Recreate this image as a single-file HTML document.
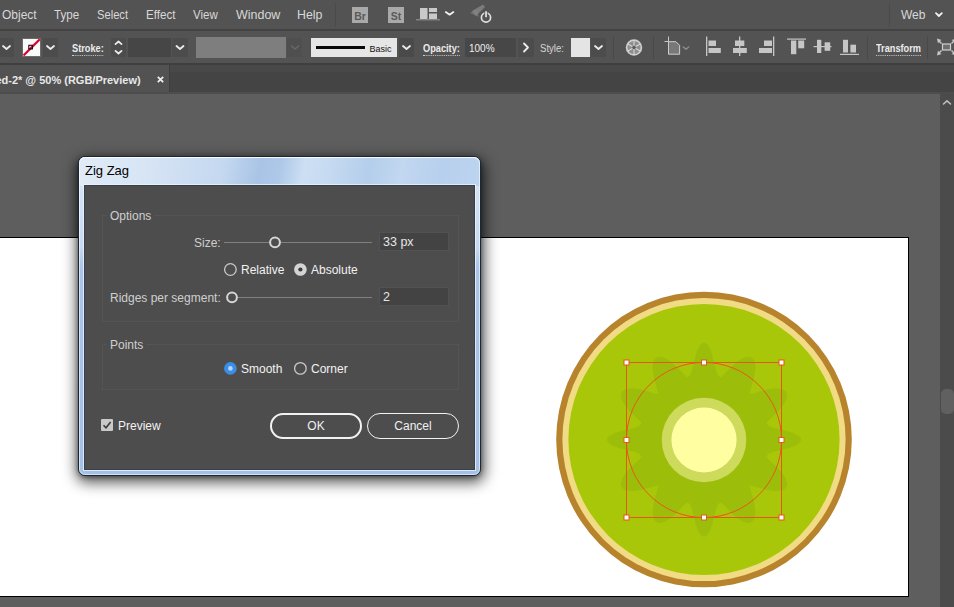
<!DOCTYPE html>
<html>
<head>
<meta charset="utf-8">
<title>Zig Zag</title>
<style>
*{box-sizing:border-box;margin:0;padding:0}
html,body{width:954px;height:607px;overflow:hidden;background:#5e5e5e;font-family:"Liberation Sans",sans-serif;}
.abs{position:absolute}
#root{position:absolute;left:0;top:0;width:954px;height:607px;overflow:hidden;background:#5e5e5e}
/* top bars */
#menubar{left:0;top:0;width:954px;height:30px;background:#535353}
#menubar .mi{position:absolute;top:6.6px;font-size:12px;line-height:16px;color:#d8d8d8;white-space:nowrap;transform-origin:0 50%}
#ctrlbar{left:0;top:29px;width:954px;height:35px;background:#535353;border-top:2px solid #434343}
#tabbar{left:0;top:63px;width:954px;height:30px;background:linear-gradient(180deg,#484848 0,#484848 7px,#444 7px,#444 100%);border-top:2px solid #3f3f3f}
#tab{left:0;top:65px;width:170px;height:27px;background:#525252;border-right:1px solid #3e3e3e}
#tabline{left:0;top:92px;width:954px;height:2px;background:#4d4d4d}
.lbl{position:absolute;font-size:10px;line-height:13px;color:#ececec;white-space:nowrap;font-weight:bold;transform-origin:0 50%}
.dot{border-bottom:1px dotted #cfcfcf}
.sep{position:absolute;width:1px;background:#484848;top:36px;height:24px}
/* canvas */
#artboard{left:-2px;top:237px;width:911px;height:360px;background:#fff;border:1px solid #000}
#vscroll{left:940px;top:93px;width:14px;height:514px;background:#4b4b4b}
#vthumb{left:941px;top:389px;width:13px;height:25px;background:#606060;border-radius:5px}
/* dialog */
#dlgshadow{left:79px;top:158px;width:401px;height:317px;border-radius:7px;box-shadow:1px 4px 14px 4px rgba(0,0,0,.62),0 1px 5px 1px rgba(0,0,0,.45)}
#dlg{left:78px;top:156px;width:403px;height:320px;border-radius:7px;border:1px solid #1d2733;overflow:hidden;
 background:
  linear-gradient(180deg,rgba(255,255,255,0) 0,rgba(255,255,255,0) 29px,#d4e3f4 29px,#c6daf1 90px,#a9c5e9 110px,#a3c0e6 100%)}
#dlgtitle{left:79px;top:157px;width:401px;height:29px;border-radius:6px 6px 0 0;
 background:linear-gradient(100deg,#e1ebf7 0%,#d6e4f4 18%,#c4d8f0 36%,#a9c4e6 45%,#adc8e8 50%,#cddff3 56%,#c6daf1 62%,#b4ceeb 72%,#c2d7f0 80%,#b7d0ed 90%,#bdd4ef 100%);
 box-shadow:inset 0 1px 0 rgba(255,255,255,.75)}
#dlghl{left:79px;top:157px;width:401px;height:318px;border-radius:6px;border:1px solid rgba(255,255,255,.55)}
#dlginner{left:84px;top:185px;width:391px;height:285px;background:#4d4d4d;border:1px solid #39404a;box-shadow:0 0 0 1px rgba(235,243,252,.8)}
.dt{position:absolute;font-size:13px;line-height:16px;color:#dadada;white-space:nowrap}
.fs{position:absolute;border:1px solid #545454}
.inp{position:absolute;background:#434343;border:1px solid #525252;color:#e6e6e6;font-size:12.5px;line-height:18px;padding-left:3px}
.track{position:absolute;height:1px;background:#808080}
.knob{position:absolute;width:12px;height:12px;border-radius:50%;border:2px solid #d8d8d8;background:#4d4d4d}
.radio{position:absolute;width:13px;height:13px;border-radius:50%;border:1px solid #d8d8d8;background:#4d4d4d}
.btn{position:absolute;height:26px;border-radius:13px;color:#f0f0f0;font-size:12px;line-height:22px;text-align:center}
</style>
</head>
<body>
<div id="root">

<!-- MENUBAR -->
<div id="menubar" class="abs">
  <span class="mi" id="m_Object" style="left:2px;transform:scaleX(1)">Object</span>
  <span class="mi" id="m_Type" style="left:54px;transform:scaleX(0.97)">Type</span>
  <span class="mi" id="m_Select" style="left:97px;transform:scaleX(0.93)">Select</span>
  <span class="mi" id="m_Effect" style="left:146px;transform:scaleX(0.97)">Effect</span>
  <span class="mi" id="m_View" style="left:193px;transform:scaleX(0.96)">View</span>
  <span class="mi" id="m_Window" style="left:236px;transform:scaleX(1.04)">Window</span>
  <span class="mi" id="m_Help" style="left:297px;transform:scaleX(1.03)">Help</span>
  <span class="mi" id="m_Web" style="left:901px;transform:scaleX(1)">Web</span>
</div>


<svg class="abs" style="left:0;top:0" width="954" height="30" viewBox="0 0 954 30">
  <rect x="335" y="3" width="1" height="24" fill="#4a4a4a"/>
  <rect x="352" y="7" width="16" height="16" fill="#a9a9a9"/>
  <rect x="388" y="7" width="16" height="16" fill="#a9a9a9"/>
  <text x="360" y="19.5" font-family="Liberation Sans, sans-serif" font-size="10.5" font-weight="bold" fill="#5a5a5a" text-anchor="middle">Br</text>
  <text x="396" y="19.5" font-family="Liberation Sans, sans-serif" font-size="10.5" font-weight="bold" fill="#5a5a5a" text-anchor="middle">St</text>
  <rect x="420" y="8" width="7.5" height="11" fill="#c9c9c9"/>
  <rect x="429" y="8" width="8" height="4" fill="#c9c9c9"/>
  <rect x="429" y="13.5" width="8" height="5.5" fill="#c9c9c9"/>
  <rect x="416" y="19.3" width="24" height="1" fill="#9a9a9a"/>
  <path d="M445.8 12.1 L449.6 14.700000000000001 L453.40000000000003 12.1" fill="none" stroke="#f2f2f2" stroke-width="1.8" stroke-linecap="round" stroke-linejoin="round"/>
  <!-- rocket + power -->
  <path d="M472 11 L483 4.5 L485 7 L476 16 Z" fill="#8a8a8a" opacity=".75"/>
  <path d="M470 13 L476 9 L479 17 Z" fill="#858585" opacity=".6"/>
  <circle cx="486" cy="17.5" r="4.6" fill="#535353" stroke="#e0e0e0" stroke-width="1.7"/>
  <rect x="484.4" y="10.5" width="3.2" height="6" fill="#535353"/>
  <rect x="485.2" y="11.2" width="1.7" height="6" fill="#e6e6e6"/>
  <rect x="889" y="3" width="1" height="24" fill="#4a4a4a"/>
  <path d="M936.0 13.2 L938.9 16.0 L941.8 13.2" fill="none" stroke="#f2f2f2" stroke-width="1.8" stroke-linecap="round" stroke-linejoin="round"/>
</svg>

<!-- CONTROL BAR -->
<div id="ctrlbar" class="abs"></div>


<svg class="abs" style="left:0;top:30px" width="954" height="34" viewBox="0 30 954 34">
  <!-- left dropdown -->
  <rect x="0" y="38" width="14" height="19" fill="#4c4c4c"/>
  <path d="M3.0 46.0 L6.5 49.0 L10.0 46.0" fill="none" stroke="#ececec" stroke-width="1.8" stroke-linecap="round" stroke-linejoin="round"/>
  <!-- stroke swatch -->
  <rect x="22" y="38" width="19" height="19" fill="#fafafa"/>
  <rect x="22.5" y="38.5" width="18" height="18" fill="none" stroke="#6b6b6b" stroke-width="1"/>
  <path d="M23.5 55.5 L39.8 39.2" stroke="#d8062f" stroke-width="2.3"/>
  <rect x="28.8" y="45.3" width="3.6" height="3.6" fill="none" stroke="#1a0a10" stroke-width="1.1"/>
  <rect x="43" y="38" width="15" height="19" fill="#4c4c4c"/>
  <path d="M47.0 46.0 L50.5 49.0 L54.0 46.0" fill="none" stroke="#ececec" stroke-width="1.8" stroke-linecap="round" stroke-linejoin="round"/>
  <!-- stroke spinner + input -->
  <rect x="111" y="38" width="15" height="19" fill="#4c4c4c"/>
  <path d="M115.5 44.099999999999994 L118.5 41.5 L121.5 44.099999999999994" fill="none" stroke="#ececec" stroke-width="1.8" stroke-linecap="round" stroke-linejoin="round"/>
  <path d="M115.5 50.900000000000006 L118.5 53.5 L121.5 50.900000000000006" fill="none" stroke="#ececec" stroke-width="1.8" stroke-linecap="round" stroke-linejoin="round"/>
  <rect x="128" y="38" width="43" height="19" fill="#464646"/>
  <rect x="172" y="38" width="16" height="19" fill="#4c4c4c"/>
  <path d="M176.5 46.0 L180 49.0 L183.5 46.0" fill="none" stroke="#ececec" stroke-width="1.8" stroke-linecap="round" stroke-linejoin="round"/>
  <!-- grey variable width box -->
  <rect x="196" y="37" width="90" height="21" fill="#7e7e7e"/>
  <rect x="287" y="38" width="15" height="19" fill="#4f4f4f"/>
  <path d="M291.5 46.0 L295 49.0 L298.5 46.0" fill="none" stroke="#686868" stroke-width="1.6" stroke-linecap="round" stroke-linejoin="round"/>
  <!-- brush def -->
  <rect x="311" y="38" width="86" height="19" fill="#e6e6e6"/>
  <rect x="316" y="46" width="49" height="3" fill="#0a0a0a"/>
  <text x="369.5" y="51.5" font-family="Liberation Sans, sans-serif" font-size="9" fill="#111">Basic</text>
  <rect x="399" y="38" width="15" height="19" fill="#4a4a4a"/>
  <path d="M403.0 46.0 L406.5 49.0 L410.0 46.0" fill="none" stroke="#ececec" stroke-width="1.8" stroke-linecap="round" stroke-linejoin="round"/>
  <!-- opacity -->
  <rect x="465" y="38" width="51" height="19" fill="#474747"/>
  <rect x="518" y="38" width="16" height="19" fill="#4c4c4c"/>
  <path d="M524 43.5 L528 47.5 L524 51.5" fill="none" stroke="#ececec" stroke-width="1.8" stroke-linecap="round" stroke-linejoin="round"/>
  <!-- style -->
  <rect x="571" y="38" width="19" height="19" fill="#e4e4e4"/>
  <rect x="591" y="38" width="15" height="19" fill="#4c4c4c"/>
  <path d="M595.0 46.0 L598.5 49.0 L602.0 46.0" fill="none" stroke="#ececec" stroke-width="1.8" stroke-linecap="round" stroke-linejoin="round"/>
  <rect x="613" y="36" width="1" height="23" fill="#494949"/>
  <!-- globe / recolor icon -->
  <circle cx="634" cy="47.5" r="7.4" fill="#8e8e8e" stroke="#cfcfcf" stroke-width="1.7"/>
  <g stroke="#d6d6d6" stroke-width="1.1">
    <path d="M634 40.5 V54.5 M627.9 44 L640.1 51 M640.1 44 L627.9 51"/>
  </g>
  <circle cx="634" cy="47.5" r="1.8" fill="#5a5a5a"/>
  <rect x="653" y="36" width="1" height="23" fill="#494949"/>
  <!-- artboard/doc setup icon -->
  <path d="M668.5 36.5 V41.5 M664.5 41.5 H668.5" stroke="#c8c8c8" stroke-width="1" fill="none"/>
  <path d="M668.5 41.7 H676 L679.6 45.3 V54.2 H668.5 Z" fill="#787878" stroke="#cdcdcd" stroke-width="1"/>
  <path d="M683.3 47 L686 49.3 L688.7 47" fill="none" stroke="#8c8c8c" stroke-width="1.5" stroke-linecap="round" stroke-linejoin="round"/>
  <!-- align icons -->
  <g fill="#c6c6c6">
    <rect x="706" y="36.5" width="1.3" height="19.5"/>
    <rect x="708.5" y="40.5" width="7.5" height="5.5"/>
    <rect x="708.5" y="48" width="12.3" height="5"/>

    <rect x="739" y="36.5" width="1.3" height="19.5"/>
    <rect x="735" y="40.5" width="9.3" height="5.5"/>
    <rect x="733" y="48" width="13.8" height="5"/>

    <rect x="773" y="36.5" width="1.3" height="19.5"/>
    <rect x="764" y="40.5" width="8" height="5.5"/>
    <rect x="759" y="48" width="13" height="5"/>

    <rect x="787" y="38.5" width="19" height="1.2"/>
    <rect x="791" y="40.5" width="5.3" height="13.7"/>
    <rect x="798.2" y="40.5" width="6" height="7.8"/>

    <rect x="813.5" y="46" width="18" height="1.2"/>
    <rect x="817" y="39.8" width="4.3" height="13.2"/>
    <rect x="824.6" y="42.3" width="5.6" height="8.5"/>

    <rect x="840" y="53.8" width="19" height="1.2"/>
    <rect x="843" y="39.8" width="5" height="12.7"/>
    <rect x="850.4" y="44.7" width="5.6" height="7.8"/>
  </g>
  <rect x="867" y="36" width="1" height="23" fill="#494949"/>
  <rect x="927" y="36" width="1" height="23" fill="#494949"/>
  <!-- isolate icon -->
  <rect x="942.5" y="44" width="8" height="6" fill="#6e6e6e" stroke="#d0d0d0" stroke-width="1.2"/>
  <g fill="#c8c8c8">
    <path d="M937 38.5 L941.5 40 L940 41 L942 43 L941 44 L939 42 L938 43.5 Z"/>
    <path d="M937 55.5 L941.5 54 L940 53 L942 51 L941 50 L939 52 L938 50.5 Z"/>
    <path d="M956 38.5 L951.5 40 L953 41 L951 43 L952 44 L954 42 L955 43.5 Z"/>
    <path d="M956 55.5 L951.5 54 L953 53 L951 51 L952 50 L954 52 L955 50.5 Z"/>
  </g>
</svg>
<div class="lbl dot" id="l_stroke" style="left:72px;top:41.6px;transform:scaleX(.92)">Stroke:</div>
<div class="lbl dot" id="l_opacity" style="left:423px;top:41.6px;transform:scaleX(.92)">Opacity:</div>
<div class="lbl" id="l_100" style="left:469px;top:41.6px;font-weight:normal;color:#efefef">100%</div>
<div class="lbl" id="l_style" style="left:539.5px;top:41.6px;transform:scaleX(.96);font-weight:normal;color:#d6d6d6">Style:</div>
<div class="lbl dot" id="l_transform" style="left:876px;top:41.6px;transform:scaleX(.92)">Transform</div>

<!-- TAB BAR -->
<div id="tabbar" class="abs"></div>
<div id="tab" class="abs"></div>
<div id="tabline" class="abs"></div>

<div class="abs" id="l_tab" style="left:-4.6px;top:72.9px;font-size:11px;line-height:14px;color:#e8e8e8;font-weight:bold;white-space:nowrap">ed-2* @ 50% (RGB/Preview)</div>
<svg class="abs" style="left:155.5px;top:75px" width="9" height="9" viewBox="0 0 9 9"><path d="M1.8 1.8 L7.2 7.2 M7.2 1.8 L1.8 7.2" stroke="#f0f0f0" stroke-width="1.7"/></svg>

<!-- CANVAS -->
<div id="artboard" class="abs"></div>
<div id="vscroll" class="abs"></div>
<div id="vthumb" class="abs"></div>
<svg class="abs" style="left:940px;top:93px" width="14" height="20" viewBox="0 0 14 20"><path d="M3.5 11 L7 7.8 L10.5 11" fill="none" stroke="#bdbdbd" stroke-width="1.6" stroke-linecap="round" stroke-linejoin="round"/></svg>



<!-- KIWI ARTWORK -->
<svg class="abs" style="left:0;top:0" width="954" height="607" viewBox="0 0 954 607">
  <circle cx="704" cy="439.5" r="147.8" fill="#b8832d"/>
  <circle cx="704" cy="439.5" r="141.6" fill="#f1db84"/>
  <circle cx="704" cy="439.5" r="135.6" fill="#a9c709"/>
  <path d="M704.0 342.8 L704.8 342.9 L705.7 343.3 L706.5 343.8 L707.3 344.6 L708.1 345.6 L708.9 346.8 L709.6 348.2 L710.3 349.7 L711.0 351.4 L711.6 353.1 L712.2 354.9 L712.7 356.8 L713.2 358.7 L713.7 360.6 L714.2 362.5 L714.6 364.3 L715.0 366.0 L715.4 367.7 L715.8 369.2 L716.2 370.6 L716.6 371.9 L717.0 373.0 L717.4 373.9 L717.8 374.7 L718.3 375.4 L718.7 375.9 L719.2 376.3 L719.7 376.6 L720.3 376.9 L720.8 377.0 L721.5 376.7 L722.3 376.1 L723.1 375.3 L724.0 374.5 L724.9 373.5 L725.9 372.5 L726.9 371.4 L727.9 370.3 L729.0 369.2 L730.1 368.0 L731.3 366.9 L732.4 365.8 L733.6 364.7 L734.8 363.7 L735.9 362.7 L737.1 361.7 L738.3 360.9 L739.5 360.0 L740.7 359.3 L741.8 358.7 L743.0 358.1 L744.1 357.6 L745.2 357.2 L746.2 357.0 L747.2 356.8 L748.2 356.7 L749.1 356.8 L749.9 356.9 L750.8 357.2 L751.5 357.5 L752.2 358.0 L752.8 358.6 L753.4 359.2 L753.9 360.0 L754.3 360.9 L754.6 361.8 L754.9 362.9 L755.1 364.0 L755.3 365.2 L755.4 366.5 L755.4 367.8 L755.3 369.2 L755.2 370.6 L755.0 372.1 L754.8 373.6 L754.5 375.1 L754.2 376.7 L753.9 378.2 L753.5 379.8 L753.1 381.3 L752.7 382.8 L752.2 384.3 L751.8 385.8 L751.4 387.2 L751.0 388.5 L750.6 389.8 L750.3 391.0 L750.0 392.1 L749.9 393.1 L750.0 393.8 L750.7 393.9 L751.7 393.8 L752.8 393.5 L754.0 393.2 L755.3 392.8 L756.6 392.4 L758.0 392.0 L759.5 391.6 L761.0 391.1 L762.5 390.7 L764.0 390.3 L765.6 389.9 L767.1 389.6 L768.7 389.3 L770.2 389.0 L771.7 388.8 L773.2 388.6 L774.6 388.5 L776.0 388.4 L777.3 388.4 L778.6 388.5 L779.8 388.7 L780.9 388.9 L782.0 389.2 L782.9 389.5 L783.8 389.9 L784.6 390.4 L785.2 391.0 L785.8 391.6 L786.3 392.3 L786.6 393.0 L786.9 393.9 L787.0 394.7 L787.1 395.6 L787.0 396.6 L786.8 397.6 L786.6 398.6 L786.2 399.7 L785.7 400.8 L785.1 402.0 L784.5 403.1 L783.8 404.3 L782.9 405.5 L782.1 406.7 L781.1 407.9 L780.1 409.0 L779.1 410.2 L778.0 411.4 L776.9 412.5 L775.8 413.7 L774.6 414.8 L773.5 415.9 L772.4 416.9 L771.3 417.9 L770.3 418.9 L769.3 419.8 L768.5 420.7 L767.7 421.5 L767.1 422.3 L766.8 423.0 L766.9 423.5 L767.2 424.1 L767.5 424.6 L767.9 425.1 L768.4 425.5 L769.1 426.0 L769.9 426.4 L770.8 426.8 L771.9 427.2 L773.2 427.6 L774.6 428.0 L776.1 428.4 L777.8 428.8 L779.5 429.2 L781.3 429.6 L783.2 430.1 L785.1 430.6 L787.0 431.1 L788.9 431.6 L790.7 432.2 L792.4 432.8 L794.1 433.5 L795.6 434.2 L797.0 434.9 L798.2 435.7 L799.2 436.5 L800.0 437.3 L800.5 438.1 L800.9 439.0 L801.0 439.8 L800.9 440.6 L800.5 441.5 L800.0 442.3 L799.2 443.1 L798.2 443.9 L797.0 444.7 L795.6 445.4 L794.1 446.1 L792.4 446.8 L790.7 447.4 L788.9 448.0 L787.0 448.5 L785.1 449.0 L783.2 449.5 L781.3 450.0 L779.5 450.4 L777.8 450.8 L776.1 451.2 L774.6 451.6 L773.2 452.0 L771.9 452.4 L770.8 452.8 L769.9 453.2 L769.1 453.6 L768.4 454.1 L767.9 454.5 L767.5 455.0 L767.2 455.5 L766.9 456.1 L766.8 456.6 L767.1 457.3 L767.7 458.1 L768.5 458.9 L769.3 459.8 L770.3 460.7 L771.3 461.7 L772.4 462.7 L773.5 463.7 L774.6 464.8 L775.8 465.9 L776.9 467.1 L778.0 468.2 L779.1 469.4 L780.1 470.6 L781.1 471.7 L782.1 472.9 L782.9 474.1 L783.8 475.3 L784.5 476.5 L785.1 477.6 L785.7 478.8 L786.2 479.9 L786.6 481.0 L786.8 482.0 L787.0 483.0 L787.1 484.0 L787.0 484.9 L786.9 485.7 L786.6 486.6 L786.3 487.3 L785.8 488.0 L785.2 488.6 L784.6 489.2 L783.8 489.7 L782.9 490.1 L782.0 490.4 L780.9 490.7 L779.8 490.9 L778.6 491.1 L777.3 491.2 L776.0 491.2 L774.6 491.1 L773.2 491.0 L771.7 490.8 L770.2 490.6 L768.7 490.3 L767.1 490.0 L765.6 489.7 L764.0 489.3 L762.5 488.9 L761.0 488.5 L759.5 488.0 L758.0 487.6 L756.6 487.2 L755.3 486.8 L754.0 486.4 L752.8 486.1 L751.7 485.8 L750.7 485.7 L750.0 485.8 L749.9 486.5 L750.0 487.5 L750.3 488.6 L750.6 489.8 L751.0 491.1 L751.4 492.4 L751.8 493.8 L752.2 495.3 L752.7 496.8 L753.1 498.3 L753.5 499.8 L753.9 501.4 L754.2 502.9 L754.5 504.5 L754.8 506.0 L755.0 507.5 L755.2 509.0 L755.3 510.4 L755.4 511.8 L755.4 513.1 L755.3 514.4 L755.1 515.6 L754.9 516.7 L754.6 517.8 L754.3 518.7 L753.9 519.6 L753.4 520.4 L752.8 521.0 L752.2 521.6 L751.5 522.1 L750.8 522.4 L749.9 522.7 L749.1 522.8 L748.2 522.9 L747.2 522.8 L746.2 522.6 L745.2 522.4 L744.1 522.0 L743.0 521.5 L741.8 520.9 L740.7 520.3 L739.5 519.6 L738.3 518.7 L737.1 517.9 L735.9 516.9 L734.8 515.9 L733.6 514.9 L732.4 513.8 L731.3 512.7 L730.1 511.6 L729.0 510.4 L727.9 509.3 L726.9 508.2 L725.9 507.1 L724.9 506.1 L724.0 505.1 L723.1 504.3 L722.3 503.5 L721.5 502.9 L720.8 502.6 L720.3 502.7 L719.7 503.0 L719.2 503.3 L718.7 503.7 L718.3 504.2 L717.8 504.9 L717.4 505.7 L717.0 506.6 L716.6 507.7 L716.2 509.0 L715.8 510.4 L715.4 511.9 L715.0 513.6 L714.6 515.3 L714.2 517.1 L713.7 519.0 L713.2 520.9 L712.7 522.8 L712.2 524.7 L711.6 526.5 L711.0 528.2 L710.3 529.9 L709.6 531.4 L708.9 532.8 L708.1 534.0 L707.3 535.0 L706.5 535.8 L705.7 536.3 L704.8 536.7 L704.0 536.8 L703.2 536.7 L702.3 536.3 L701.5 535.8 L700.7 535.0 L699.9 534.0 L699.1 532.8 L698.4 531.4 L697.7 529.9 L697.0 528.2 L696.4 526.5 L695.8 524.7 L695.3 522.8 L694.8 520.9 L694.3 519.0 L693.8 517.1 L693.4 515.3 L693.0 513.6 L692.6 511.9 L692.2 510.4 L691.8 509.0 L691.4 507.7 L691.0 506.6 L690.6 505.7 L690.2 504.9 L689.7 504.2 L689.3 503.7 L688.8 503.3 L688.3 503.0 L687.7 502.7 L687.2 502.6 L686.5 502.9 L685.7 503.5 L684.9 504.3 L684.0 505.1 L683.1 506.1 L682.1 507.1 L681.1 508.2 L680.1 509.3 L679.0 510.4 L677.9 511.6 L676.7 512.7 L675.6 513.8 L674.4 514.9 L673.2 515.9 L672.1 516.9 L670.9 517.9 L669.7 518.7 L668.5 519.6 L667.3 520.3 L666.2 520.9 L665.0 521.5 L663.9 522.0 L662.8 522.4 L661.8 522.6 L660.8 522.8 L659.8 522.9 L658.9 522.8 L658.1 522.7 L657.2 522.4 L656.5 522.1 L655.8 521.6 L655.2 521.0 L654.6 520.4 L654.1 519.6 L653.7 518.7 L653.4 517.8 L653.1 516.7 L652.9 515.6 L652.7 514.4 L652.6 513.1 L652.6 511.8 L652.7 510.4 L652.8 509.0 L653.0 507.5 L653.2 506.0 L653.5 504.5 L653.8 502.9 L654.1 501.4 L654.5 499.8 L654.9 498.3 L655.3 496.8 L655.8 495.3 L656.2 493.8 L656.6 492.4 L657.0 491.1 L657.4 489.8 L657.7 488.6 L658.0 487.5 L658.1 486.5 L658.0 485.8 L657.3 485.7 L656.3 485.8 L655.2 486.1 L654.0 486.4 L652.7 486.8 L651.4 487.2 L650.0 487.6 L648.5 488.0 L647.0 488.5 L645.5 488.9 L644.0 489.3 L642.4 489.7 L640.9 490.0 L639.3 490.3 L637.8 490.6 L636.3 490.8 L634.8 491.0 L633.4 491.1 L632.0 491.2 L630.7 491.2 L629.4 491.1 L628.2 490.9 L627.1 490.7 L626.0 490.4 L625.1 490.1 L624.2 489.7 L623.4 489.2 L622.8 488.6 L622.2 488.0 L621.7 487.3 L621.4 486.6 L621.1 485.7 L621.0 484.9 L620.9 484.0 L621.0 483.0 L621.2 482.0 L621.4 481.0 L621.8 479.9 L622.3 478.8 L622.9 477.6 L623.5 476.5 L624.2 475.3 L625.1 474.1 L625.9 472.9 L626.9 471.7 L627.9 470.6 L628.9 469.4 L630.0 468.2 L631.1 467.1 L632.2 465.9 L633.4 464.8 L634.5 463.7 L635.6 462.7 L636.7 461.7 L637.7 460.7 L638.7 459.8 L639.5 458.9 L640.3 458.1 L640.9 457.3 L641.2 456.6 L641.1 456.1 L640.8 455.5 L640.5 455.0 L640.1 454.5 L639.6 454.1 L638.9 453.6 L638.1 453.2 L637.2 452.8 L636.1 452.4 L634.8 452.0 L633.4 451.6 L631.9 451.2 L630.2 450.8 L628.5 450.4 L626.7 450.0 L624.8 449.5 L622.9 449.0 L621.0 448.5 L619.1 448.0 L617.3 447.4 L615.6 446.8 L613.9 446.1 L612.4 445.4 L611.0 444.7 L609.8 443.9 L608.8 443.1 L608.0 442.3 L607.5 441.5 L607.1 440.6 L607.0 439.8 L607.1 439.0 L607.5 438.1 L608.0 437.3 L608.8 436.5 L609.8 435.7 L611.0 434.9 L612.4 434.2 L613.9 433.5 L615.6 432.8 L617.3 432.2 L619.1 431.6 L621.0 431.1 L622.9 430.6 L624.8 430.1 L626.7 429.6 L628.5 429.2 L630.2 428.8 L631.9 428.4 L633.4 428.0 L634.8 427.6 L636.1 427.2 L637.2 426.8 L638.1 426.4 L638.9 426.0 L639.6 425.5 L640.1 425.1 L640.5 424.6 L640.8 424.1 L641.1 423.5 L641.2 423.0 L640.9 422.3 L640.3 421.5 L639.5 420.7 L638.7 419.8 L637.7 418.9 L636.7 417.9 L635.6 416.9 L634.5 415.9 L633.4 414.8 L632.2 413.7 L631.1 412.5 L630.0 411.4 L628.9 410.2 L627.9 409.0 L626.9 407.9 L625.9 406.7 L625.1 405.5 L624.2 404.3 L623.5 403.1 L622.9 402.0 L622.3 400.8 L621.8 399.7 L621.4 398.6 L621.2 397.6 L621.0 396.6 L620.9 395.6 L621.0 394.7 L621.1 393.9 L621.4 393.0 L621.7 392.3 L622.2 391.6 L622.8 391.0 L623.4 390.4 L624.2 389.9 L625.1 389.5 L626.0 389.2 L627.1 388.9 L628.2 388.7 L629.4 388.5 L630.7 388.4 L632.0 388.4 L633.4 388.5 L634.8 388.6 L636.3 388.8 L637.8 389.0 L639.3 389.3 L640.9 389.6 L642.4 389.9 L644.0 390.3 L645.5 390.7 L647.0 391.1 L648.5 391.6 L650.0 392.0 L651.4 392.4 L652.7 392.8 L654.0 393.2 L655.2 393.5 L656.3 393.8 L657.3 393.9 L658.0 393.8 L658.1 393.1 L658.0 392.1 L657.7 391.0 L657.4 389.8 L657.0 388.5 L656.6 387.2 L656.2 385.8 L655.8 384.3 L655.3 382.8 L654.9 381.3 L654.5 379.8 L654.1 378.2 L653.8 376.7 L653.5 375.1 L653.2 373.6 L653.0 372.1 L652.8 370.6 L652.7 369.2 L652.6 367.8 L652.6 366.5 L652.7 365.2 L652.9 364.0 L653.1 362.9 L653.4 361.8 L653.7 360.9 L654.1 360.0 L654.6 359.2 L655.2 358.6 L655.8 358.0 L656.5 357.5 L657.2 357.2 L658.1 356.9 L658.9 356.8 L659.8 356.7 L660.8 356.8 L661.8 357.0 L662.8 357.2 L663.9 357.6 L665.0 358.1 L666.2 358.7 L667.3 359.3 L668.5 360.0 L669.7 360.9 L670.9 361.7 L672.1 362.7 L673.2 363.7 L674.4 364.7 L675.6 365.8 L676.7 366.9 L677.9 368.0 L679.0 369.2 L680.1 370.3 L681.1 371.4 L682.1 372.5 L683.1 373.5 L684.0 374.5 L684.9 375.3 L685.7 376.1 L686.5 376.7 L687.2 377.0 L687.7 376.9 L688.3 376.6 L688.8 376.3 L689.3 375.9 L689.7 375.4 L690.2 374.7 L690.6 373.9 L691.0 373.0 L691.4 371.9 L691.8 370.6 L692.2 369.2 L692.6 367.7 L693.0 366.0 L693.4 364.3 L693.8 362.5 L694.3 360.6 L694.8 358.7 L695.3 356.8 L695.8 354.9 L696.4 353.1 L697.0 351.4 L697.7 349.7 L698.4 348.2 L699.1 346.8 L699.9 345.6 L700.7 344.6 L701.5 343.8 L702.3 343.3 L703.2 342.9Z" fill="#9dbd0b"/>
  <circle cx="704" cy="440" r="42.3" fill="#cdda5c"/>
  <circle cx="704" cy="440" r="32.6" fill="#ffffa2"/>
  <g fill="none" stroke="#e9561b" stroke-width="1">
    <circle cx="704" cy="440" r="77.6"/>
    <rect x="626.5" y="362.5" width="155" height="155"/>
  </g>
  <g fill="#fff" stroke="#e9561b" stroke-width="1">
    <rect x="624" y="360" width="5" height="5"/><rect x="701.5" y="360" width="5" height="5"/><rect x="779" y="360" width="5" height="5"/>
    <rect x="624" y="437.5" width="5" height="5"/><rect x="779" y="437.5" width="5" height="5"/>
    <rect x="624" y="515" width="5" height="5"/><rect x="701.5" y="515" width="5" height="5"/><rect x="779" y="515" width="5" height="5"/>
  </g>
</svg>

<!-- DIALOG -->
<div id="dlgshadow" class="abs"></div>
<div id="dlg" class="abs"></div>
<div id="dlgtitle" class="abs"></div>
<div id="dlghl" class="abs"></div>
<div id="dlginner" class="abs"></div>

<!-- DIALOG CONTENT -->
<div class="dt" id="title" style="left:85px;top:163px;color:#000;font-size:13px">Zig Zag</div>

<div class="fs" style="left:102px;top:215px;width:357px;height:107px"></div>
<div class="dt" id="t_options" style="left:107px;top:208px;background:#4d4d4d;padding:0 3px;font-size:12px;color:#cfcfcf">Options</div>
<div class="dt" id="t_size" style="left:194px;top:235px;font-size:12px;color:#cfcfcf">Size:</div>
<div class="track" style="left:224px;top:242px;width:148px"></div>
<div class="inp" style="left:379px;top:232px;width:70px;height:19px"><span id="t_33">33 px</span></div>

<div class="dt" id="t_rel" style="left:241px;top:262px;font-size:12px;color:#f2f2f2">Relative</div>
<div class="dt" id="t_abs" style="left:311px;top:262px;font-size:12px;color:#f2f2f2">Absolute</div>

<div class="dt" id="t_ridges" style="left:110px;top:290px;font-size:12px;color:#cfcfcf">Ridges per segment:</div>
<div class="track" style="left:232px;top:297px;width:140px"></div>
<div class="inp" style="left:379px;top:287px;width:70px;height:19px"><span id="t_2">2</span></div>

<div class="fs" style="left:102px;top:344px;width:357px;height:46px"></div>
<div class="dt" id="t_points" style="left:107px;top:337px;background:#4d4d4d;padding:0 3px;font-size:12px;color:#cfcfcf">Points</div>
<div class="dt" id="t_smooth" style="left:241px;top:361px;font-size:12px;color:#f2f2f2">Smooth</div>
<div class="dt" id="t_corner" style="left:311px;top:361px;font-size:12px;color:#f2f2f2">Corner</div>

<svg class="abs" style="left:84px;top:185px" width="391" height="285" viewBox="84 185 391 285">
  <!-- slider knobs -->
  <circle cx="275" cy="242.3" r="4.9" fill="#4d4d4d" stroke="#d6d6d6" stroke-width="2"/>
  <circle cx="232" cy="297.3" r="4.9" fill="#4d4d4d" stroke="#d6d6d6" stroke-width="2"/>
  <!-- radios -->
  <circle cx="230.4" cy="269.5" r="5.8" fill="#4d4d4d" stroke="#c9c9c9" stroke-width="1.3"/>
  <circle cx="300.4" cy="269.5" r="6.3" fill="#d4d4d4"/>
  <circle cx="300.4" cy="269.5" r="2.1" fill="#3a3a3a"/>
  <circle cx="230.4" cy="368.4" r="6.3" fill="#3a8ee8"/>
  <circle cx="230.4" cy="368.4" r="2.3" fill="#b5d6f8"/>
  <circle cx="300.4" cy="368.4" r="5.8" fill="#4d4d4d" stroke="#c9c9c9" stroke-width="1.3"/>
</svg>
<div class="abs" id="chk" style="left:101px;top:419px;width:12px;height:12px;background:#c9c9c9;border-radius:1px"></div>
<svg class="abs" style="left:101px;top:419px" width="12" height="12" viewBox="0 0 12 12"><path d="M2.5 6.2 L5 8.8 L9.6 3" fill="none" stroke="#3c3c3c" stroke-width="1.6"/></svg>
<div class="dt" id="t_preview" style="left:118px;top:418px;font-size:12px;color:#f2f2f2">Preview</div>

<div class="btn" id="b_ok" style="left:270px;top:413px;width:92px;border:2px solid #f2f2f2;line-height:23px">OK</div>
<div class="btn" id="b_cancel" style="left:367px;top:413px;width:92px;border:1px solid #f2f2f2;line-height:25px">Cancel</div>


</div>
</body>
</html>
